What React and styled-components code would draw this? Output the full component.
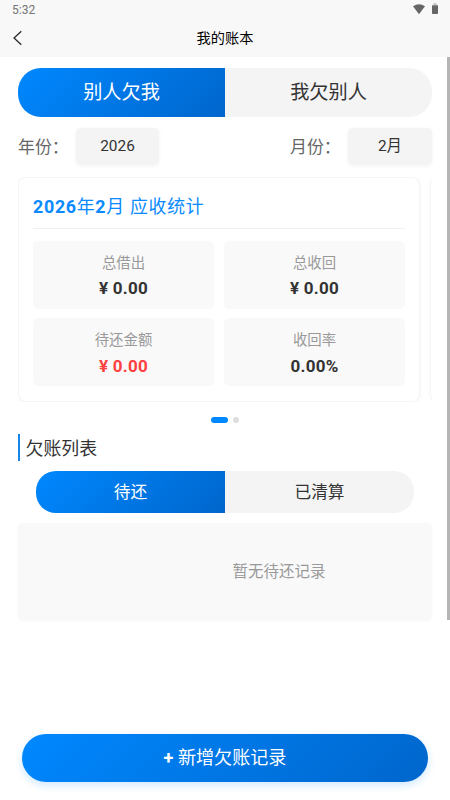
import React from "react";
import styled, { createGlobalStyle } from "styled-components";

const GlobalStyle = createGlobalStyle`
  * { box-sizing: border-box; }
  body {
    margin: 0;
    background: #fff;
    font-family: Roboto, "Noto Sans CJK SC", sans-serif;
    color: #333;
    overflow: hidden;
  }
`;

const blueGradient = "linear-gradient(135deg, #0088ff 0%, #0066cc 100%)";

const Screen = styled.div`
  width: 450px;
  height: 800px;
  display: flex;
  flex-direction: column;
  position: relative;
  overflow: hidden;
`;

const Top = styled.header`
  height: 57px;
  flex: none;
  background: #f8f8f8;
`;

const StatusBar = styled.div`
  height: 20px;
  padding: 0 11px 0 12px;
  display: flex;
  align-items: center;
  justify-content: space-between;
  font-size: 12px;
  line-height: 20px;
  color: #757575;
`;

const StatusIcons = styled.div`
  display: flex;
  gap: 5px;
  height: 20px;
`;

const NavBar = styled.div`
  height: 37px;
  display: grid;
  grid-template-columns: 36px 1fr 36px;
  align-items: start;
`;

const NavTitle = styled.h1`
  margin: 0;
  text-align: center;
  font-size: 14.2px;
  font-weight: 400;
  line-height: 37px;
  color: #000;
`;

const BackIcon = styled.svg`
  display: block;
  margin: 10px 0 0 12px;
`;

const Content = styled.main`
  flex: 1;
  padding: 11px 18px 0;
  display: flex;
  flex-direction: column;
`;

const Segmented = styled.div`
  flex: none;
  display: grid;
  grid-template-columns: 1fr 1fr;
  height: ${(p) => (p.$small ? "41.5px" : "49px")};
  margin: ${(p) => (p.$small ? "10px 18px 0" : "0")};
  border-radius: ${(p) => (p.$small ? "20px" : "23px")};
  background: #f4f4f4;
  overflow: hidden;
  font-size: ${(p) => (p.$small ? "16.7px" : "19.2px")};
  line-height: ${(p) => (p.$small ? "43px" : "49px")};
  text-align: center;
`;

const Segment = styled.div`
  background: ${(p) => (p.$active ? blueGradient : "transparent")};
  color: ${(p) => (p.$active ? "#fff" : "#333")};
`;

const Filters = styled.div`
  margin-top: 11px;
  height: 37px;
  flex: none;
  display: flex;
  justify-content: space-between;
`;

const Filter = styled.div`
  display: flex;
  gap: 7px;
`;

const FilterLabel = styled.span`
  width: 51px;
  font-size: 16.9px;
  line-height: 38px;
  color: #666;
  white-space: nowrap;
`;

const Picker = styled.div`
  width: ${(p) => p.$width};
  height: 37px;
  border-radius: 5px;
  background: #f4f4f4;
  box-shadow: 0 1px 4px rgba(0, 0, 0, 0.05);
  text-align: center;
  font-size: 15.4px;
  line-height: 36px;
  color: #333;
`;

const Carousel = styled.div`
  margin-top: 12px;
  height: 225px;
  flex: none;
  display: flex;
  gap: 10px;
  overflow: hidden;
`;

const StatCard = styled.section`
  width: 402px;
  flex: none;
  height: 225px;
  padding: 14px;
  border: 1px solid #f5f5f5;
  border-radius: 8px;
  background: #fff;
  box-shadow: 0 1px 5px rgba(0, 0, 0, 0.04);
`;

const StatTitle = styled.h2`
  margin: 0;
  height: 37px;
  border-bottom: 1px solid #f0f0f0;
  font-size: 17.9px;
  font-weight: 400;
  letter-spacing: 0.68px;
  line-height: 29px;
  color: #0a8aff;
`;

const StatGrid = styled.div`
  margin-top: 12px;
  display: grid;
  grid-template-columns: 181px 181px;
  grid-auto-rows: 68px;
  gap: 9.4px 10px;
`;

const Stat = styled.div`
  padding-top: 10px;
  border-radius: 5px;
  background: #f9f9f9;
  text-align: center;
`;

const StatLabel = styled.div`
  height: 24px;
  font-size: 14.4px;
  line-height: 25px;
  color: #999;
`;

const StatValue = styled.div`
  margin-top: 0.4px;
  font-size: 17px;
  font-weight: 700;
  line-height: 26px;
  letter-spacing: 0.25px;
  color: ${(p) => (p.$danger ? "#ff4040" : "#333")};
`;

const Dots = styled.div`
  flex: none;
  margin-top: 14px;
  height: 7px;
  display: flex;
  align-items: center;
  justify-content: center;
  gap: 5px;
`;

const Dot = styled.i`
  width: ${(p) => (p.$active ? "17px" : "6px")};
  height: 6px;
  border-radius: 3px;
  background: ${(p) => (p.$active ? "#0088ff" : "#ddd")};
`;

const ListTitle = styled.h2`
  flex: none;
  margin: 11px 0 0;
  height: 27px;
  padding-left: 5.5px;
  border-left: 2px solid #1686e8;
  font-size: 17.9px;
  font-weight: 400;
  line-height: 30px;
  color: #333;
`;

const Empty = styled.div`
  flex: none;
  margin-top: 10px;
  height: 97px;
  padding-left: 108px;
  border-radius: 5px;
  background: #f9f9f9;
  box-shadow: 0 1px 3px rgba(0, 0, 0, 0.035);
  text-align: center;
  font-size: 15.5px;
  line-height: 99px;
  color: #999;
`;

const AddButton = styled.button`
  flex: none;
  height: 48px;
  margin: 0 22px 18px;
  padding: 0 0 4px;
  border: 0;
  border-radius: 24px;
  background: ${blueGradient};
  box-shadow: 0 3px 9px rgba(0, 136, 255, 0.2);
  color: #fff;
  font: 400 18.1px Roboto, "Noto Sans CJK SC", sans-serif;
`;

const ScrollThumb = styled.div`
  position: absolute;
  top: 57px;
  right: 0;
  width: 3px;
  height: 563px;
  background: #b5b5b5;
`;

const stats = [
  { label: "总借出", value: "¥ 0.00" },
  { label: "总收回", value: "¥ 0.00" },
  { label: "待还金额", value: "¥ 0.00", danger: true },
  { label: "收回率", value: "0.00%" },
];

export default function App() {
  return (
    <Screen>
      <GlobalStyle />
      <Top>
        <StatusBar>
          <span>5:32</span>
          <StatusIcons>
            <svg width="14" height="20" viewBox="0 0 14 20">
              <path d="M1 6.2Q7 2.2 13 6.2L7 14.2Z" fill="#666" />
            </svg>
            <svg width="8" height="20" viewBox="0 0 8 20">
              <path d="M2.5 3.3H5.5V5H7V8H1V5H2.5Z" fill="#bbb" />
              <path d="M1 5.6H7V13.3Q7 14 6.3 14H1.7Q1 14 1 13.3Z" fill="#666" />
            </svg>
          </StatusIcons>
        </StatusBar>
        <NavBar>
          <BackIcon width="12" height="16" viewBox="0 0 12 16">
            <path d="M9.3 1.3L2 8L9.3 14.7" fill="none" stroke="#222" strokeWidth="1.2" />
          </BackIcon>
          <NavTitle>我的账本</NavTitle>
        </NavBar>
      </Top>
      <Content>
        <Segmented>
          <Segment $active>别人欠我</Segment>
          <Segment>我欠别人</Segment>
        </Segmented>
        <Filters>
          <Filter>
            <FilterLabel>年份：</FilterLabel>
            <Picker $width="83px">2026</Picker>
          </Filter>
          <Filter>
            <FilterLabel>月份：</FilterLabel>
            <Picker $width="84px">2月</Picker>
          </Filter>
        </Filters>
        <Carousel>
          <StatCard>
            <StatTitle>
              <b>2026</b>年<b>2</b>月 应收统计
            </StatTitle>
            <StatGrid>
              {stats.map((s) => (
                <Stat key={s.label}>
                  <StatLabel>{s.label}</StatLabel>
                  <StatValue $danger={s.danger}>{s.value}</StatValue>
                </Stat>
              ))}
            </StatGrid>
          </StatCard>
          <StatCard />
        </Carousel>
        <Dots>
          <Dot $active />
          <Dot />
        </Dots>
        <ListTitle>欠账列表</ListTitle>
        <Segmented $small>
          <Segment $active>待还</Segment>
          <Segment>已清算</Segment>
        </Segmented>
        <Empty>暂无待还记录</Empty>
      </Content>
      <AddButton>
        <b>+</b> 新增欠账记录
      </AddButton>
      <ScrollThumb />
    </Screen>
  );
}
